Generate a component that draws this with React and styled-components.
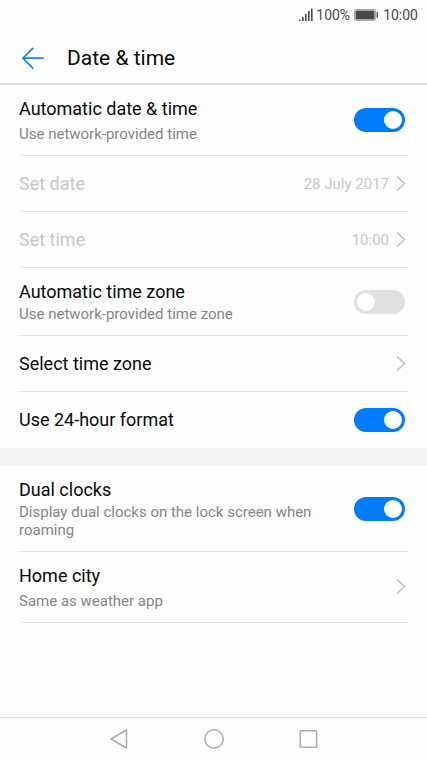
import React, { useState } from "react"
import styled, { createGlobalStyle } from "styled-components"

const GlobalStyle = createGlobalStyle`
  * {
    box-sizing: border-box;
  }
  body {
    margin: 0;
    background: #fdfdfd;
    color: #0a0a0a;
    font-family: Roboto, "Liberation Sans", sans-serif;
  }
  button {
    border: 0;
    padding: 0;
    background: none;
    color: inherit;
    font: inherit;
  }
  svg {
    display: block;
    flex-shrink: 0;
  }
`

const Screen = styled.div`
  min-height: 100vh;
  display: flex;
  flex-direction: column;
`

const StatusBar = styled.div`
  display: flex;
  align-items: center;
  justify-content: flex-end;
  height: 29px;
  padding: 0 9px;
  color: #4a4a4a;
  font-size: 14px;
  line-height: 16px;
`

const BatterySlot = styled.span`
  margin: 0 5px 0 4px;
`

const SignalSlot = styled.span`
  margin-right: 3px;
`

const Header = styled.header`
  display: flex;
  align-items: center;
  gap: 22px;
  height: 56px;
  padding: 4px 22px 0;
  border-bottom: 2px solid #e2e2e2;
`

const Title = styled.h1`
  margin: 0;
  font-size: 21px;
  font-weight: 400;
  line-height: 28px;
`

const Main = styled.main`
  flex: 1;
`

const Section = styled.section`
  padding: 0 19px;

  & + & {
    border-top: 18px solid #f4f4f4;
  }
`

const Row = styled.div`
  display: flex;
  align-items: center;
  justify-content: space-between;
  width: 100%;
  min-height: 56px;
  padding: 12px 2px 12px 0;
  border-bottom: ${({ $last }) => ($last ? "0" : "1px solid #e2e2e2")};
  color: ${({ disabled }) => (disabled ? "#c8c8c8" : "inherit")};
  text-align: left;
`

const Texts = styled.span`
  display: flex;
  flex-direction: column;
  gap: ${({ $roomy }) => ($roomy ? "4px" : "1px")};
  padding-right: 24px;
`

const Name = styled.span`
  font-size: 18px;
  line-height: 24px;
`

const Note = styled.span`
  color: #868686;
  font-size: 15px;
  line-height: 18px;
`

const Value = styled.span`
  margin-left: auto;
  padding-right: 7px;
  font-size: 15px;
  line-height: 18px;
`

const Switch = styled.input`
  appearance: none;
  flex-shrink: 0;
  width: 51px;
  height: 24px;
  margin: 0 1px 0 0;
  padding: 3px;
  border-radius: 12px;
  background: #e0e0e0;

  &::before {
    content: "";
    display: block;
    width: 18px;
    height: 18px;
    border-radius: 50%;
    background: #fff;
  }
  &:checked {
    background: #007dff;
  }
  &:checked::before {
    margin-left: auto;
  }
`

const NavBar = styled.nav`
  display: flex;
  align-items: center;
  justify-content: center;
  gap: 71px;
  height: 43px;
  border-top: 1px solid #e2e2e2;
`

const SignalIcon = () => (
  <svg width="14" height="14" viewBox="0 0 14 14" fill="#4a4a4a">
    <rect x="0" y="11.5" width="1.6" height="1.5" />
    <rect x="3" y="9" width="1.6" height="4" />
    <rect x="6" y="6" width="1.6" height="7" />
    <rect x="9" y="3" width="1.6" height="10" />
    <rect x="12" y="0.5" width="1.6" height="12.5" />
  </svg>
)

const BatteryIcon = () => (
  <svg width="24" height="12" viewBox="0 0 24 12">
    <rect x="0.5" y="0.5" width="21" height="11" rx="1.5" fill="#fdfdfd" stroke="#aaa" />
    <rect x="1.5" y="1.5" width="19" height="9" rx="0.5" fill="#4a4a4a" />
    <rect x="22.5" y="3" width="1.5" height="6" fill="#6a6a6a" />
  </svg>
)

const BackArrow = () => (
  <svg width="23" height="23" viewBox="0 0 23 23" fill="none" stroke="#1a84f0" strokeWidth="1.7">
    <path d="M11.3 0.8 0.9 11.2 11.3 21.6M1 11.2H21.6" />
  </svg>
)

const Chevron = () => (
  <svg width="10" height="16" viewBox="0 0 10 16" fill="none" stroke="#c4c4c4" strokeWidth="1.6">
    <path d="M1 0.6 8.6 7.6 1 14.6" />
  </svg>
)

const SwitchRow = ({ name, note, on = false, roomy, last }) => {
  const [checked, setChecked] = useState(on)
  return (
    <Row as="label" $last={last}>
      <Texts $roomy={roomy}>
        <Name>{name}</Name>
        {note && <Note>{note}</Note>}
      </Texts>
      <Switch
        type="checkbox"
        role="switch"
        checked={checked}
        onChange={() => setChecked(!checked)}
      />
    </Row>
  )
}

const LinkRow = ({ name, note, value, disabled, roomy }) => (
  <Row as="button" type="button" disabled={disabled}>
    <Texts $roomy={roomy}>
      <Name>{name}</Name>
      {note && <Note>{note}</Note>}
    </Texts>
    {value && <Value>{value}</Value>}
    <Chevron />
  </Row>
)

export default function App() {
  return (
    <Screen>
      <GlobalStyle />
      <StatusBar>
        <SignalSlot>
          <SignalIcon />
        </SignalSlot>
        <span>100%</span>
        <BatterySlot>
          <BatteryIcon />
        </BatterySlot>
        <span>10:00</span>
      </StatusBar>
      <Header>
        <button type="button" aria-label="Back">
          <BackArrow />
        </button>
        <Title>Date &amp; time</Title>
      </Header>
      <Main>
        <Section>
          <SwitchRow name="Automatic date &amp; time" note="Use network-provided time" on roomy />
          <LinkRow name="Set date" value="28 July 2017" disabled />
          <LinkRow name="Set time" value="10:00" disabled />
          <SwitchRow name="Automatic time zone" note="Use network-provided time zone" />
          <LinkRow name="Select time zone" />
          <SwitchRow name="Use 24-hour format" on last />
        </Section>
        <Section>
          <SwitchRow
            name="Dual clocks"
            note="Display dual clocks on the lock screen when roaming"
            on
          />
          <LinkRow name="Home city" note="Same as weather app" roomy />
        </Section>
      </Main>
      <NavBar>
        <button type="button" aria-label="Back">
          <svg width="24" height="22" viewBox="0 0 24 22" fill="none" stroke="#adadad" strokeWidth="1.5" strokeLinejoin="round">
            <path d="M4 11 19.5 2V20Z" />
          </svg>
        </button>
        <button type="button" aria-label="Home">
          <svg width="24" height="22" viewBox="0 0 24 22" fill="none" stroke="#adadad" strokeWidth="1.5">
            <circle cx="12" cy="11" r="9.2" />
          </svg>
        </button>
        <button type="button" aria-label="Recent apps">
          <svg width="24" height="22" viewBox="0 0 24 22" fill="none" stroke="#adadad" strokeWidth="1.5" strokeLinejoin="round">
            <rect x="3.2" y="2.8" width="16.4" height="16.4" rx="0.5" />
          </svg>
        </button>
      </NavBar>
    </Screen>
  )
}
